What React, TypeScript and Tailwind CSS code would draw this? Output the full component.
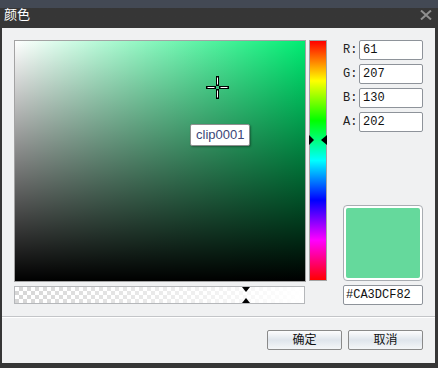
import React from 'react';

const CJK = "font-['Liberation_Sans','Noto_Sans_CJK_SC',sans-serif]";
const MONO = "font-['Liberation_Mono','Noto_Sans_CJK_SC',monospace]";

const Crosshair: React.FC = () => (
  <svg width="23" height="23" viewBox="0 0 23 23" className="absolute left-[191px] top-[35px]">
    <g stroke="#000" strokeWidth="3" strokeLinecap="square">
      <line x1="11.5" y1="1.5" x2="11.5" y2="8.5" />
      <line x1="11.5" y1="14.5" x2="11.5" y2="21.5" />
      <line x1="1.5" y1="11.5" x2="8.5" y2="11.5" />
      <line x1="14.5" y1="11.5" x2="21.5" y2="11.5" />
    </g>
    <g stroke="#fff" strokeWidth="1">
      <line x1="11.5" y1="1.5" x2="11.5" y2="8.5" />
      <line x1="11.5" y1="14.5" x2="11.5" y2="21.5" />
      <line x1="1.5" y1="11.5" x2="8.5" y2="11.5" />
      <line x1="14.5" y1="11.5" x2="21.5" y2="11.5" />
    </g>
  </svg>
);

const Field: React.FC<{ label: string; value: string }> = ({ label, value }) => (
  <div className="flex items-center h-5">
    <span className={`w-4 text-[12px] text-[#222] ${MONO}`}>{label}</span>
    <div className={`ml-auto w-16 h-5 bg-white border border-[#8e939a] rounded-[2px] px-[3px] flex items-center text-[12px] text-[#111] ${MONO}`}>
      {value}
    </div>
  </div>
);

const Button: React.FC<{ text: string }> = ({ text }) => (
  <div
    className={`w-[75px] h-5 flex items-center justify-center border border-[#8a8a8a] rounded-[2px] bg-linear-to-b from-[#fdfdfe] via-[#dfe5ec] to-[#f4f6f8] text-[12px] text-[#111] ${CJK}`}
  >
    {text}
  </div>
);

const App: React.FC = () => {
  return (
    <div className="w-[438px] h-[368px] bg-[#363636] flex flex-col overflow-hidden">
      <div className="h-[28px] shrink-0 relative bg-linear-to-b from-[#434954] from-[28%] to-[#363636] to-[30%] flex items-center px-1">
        <span className={`text-white text-[13px] pt-[2px] ${CJK}`}>颜色</span>
        <svg width="12" height="10" viewBox="0 0 12 10" className="absolute left-[420px] top-[10px]">
          <path d="M1 0.5 L11 9.5 M11 0.5 L1 9.5" stroke="#8f8f8f" strokeWidth="2" />
        </svg>
      </div>
      <div className="ml-[2px] mr-[3px] h-[335px] bg-[#f0f1f2] flex flex-col">
        <div className="pl-3 pt-3 pr-3 h-[289px] flex flex-col gap-1 border-b border-[#c3c5c8]">
          <div className="flex h-[242px]">
            <div className="relative w-[292px] h-[242px] border border-[#a3a3a3] bg-[#00ec72]">
              <div className="absolute inset-0 bg-linear-to-r from-white to-white/0" />
              <div className="absolute inset-0 bg-linear-to-b from-black/0 to-black" />
              <Crosshair />
              <div className="absolute left-[175px] top-[83px] h-[22px] px-[5px] flex items-center bg-white border border-[#8f8f8f] rounded-[2px] shadow-[1px_1px_2px_rgba(0,0,0,0.35)] text-[13px] text-[#3b4678] font-['Liberation_Sans',sans-serif]">
                clip0001
              </div>
            </div>
            <div className="relative ml-[3px] w-[18px] h-[241px] border border-[#a3a3a3] bg-[linear-gradient(to_bottom,#ff0000,#ffff00,#00ff00,#00ffff,#0000ff,#ff00ff,#ff0000)]">
              <div className="absolute left-[-1px] top-[94px] w-0 h-0 border-y-[5px] border-y-transparent border-l-[5px] border-l-black" />
              <div className="absolute right-[-1px] top-[94px] w-0 h-0 border-y-[5px] border-y-transparent border-r-[6px] border-r-black" />
            </div>
            <div className="ml-4 w-20 flex flex-col justify-between pb-[1px]">
              <div className="flex flex-col gap-1">
                <Field label="R:" value="61" />
                <Field label="G:" value="207" />
                <Field label="B:" value="130" />
                <Field label="A:" value="202" />
              </div>
              <div className="h-[76px] rounded-[4px] border border-[#a9adb2] bg-white p-[2px]">
                <div className="w-full h-full rounded-[2px] bg-[#65d99c]" />
              </div>
            </div>
          </div>
          <div className="flex items-start">
            <div className="relative w-[291px] h-[18px] border border-[#b5b7ba] bg-white">
              <div className="absolute inset-0 bg-[repeating-conic-gradient(#d6d6d6_0_25%,#ffffff_0_50%)] bg-[length:8px_8px]" />
              <div className="absolute inset-0 bg-linear-to-r from-white/0 to-white" />
              <div className="absolute left-[227px] top-0 w-0 h-0 border-x-[4px] border-x-transparent border-t-[5px] border-t-black" />
              <div className="absolute left-[227px] bottom-0 w-0 h-0 border-x-[4px] border-x-transparent border-b-[5px] border-b-black" />
            </div>
            <div className={`ml-[38px] mt-[-1px] w-20 h-5 bg-white border border-[#8e939a] rounded-[2px] px-[2px] flex items-center text-[12px] text-[#111] ${MONO}`}>
              #CA3DCF82
            </div>
          </div>
        </div>
        <div className="border-t border-white flex justify-end gap-[6px] pr-3 pt-[12px]">
          <Button text="确定" />
          <Button text="取消" />
        </div>
      </div>
    </div>
  );
};

export default App;
